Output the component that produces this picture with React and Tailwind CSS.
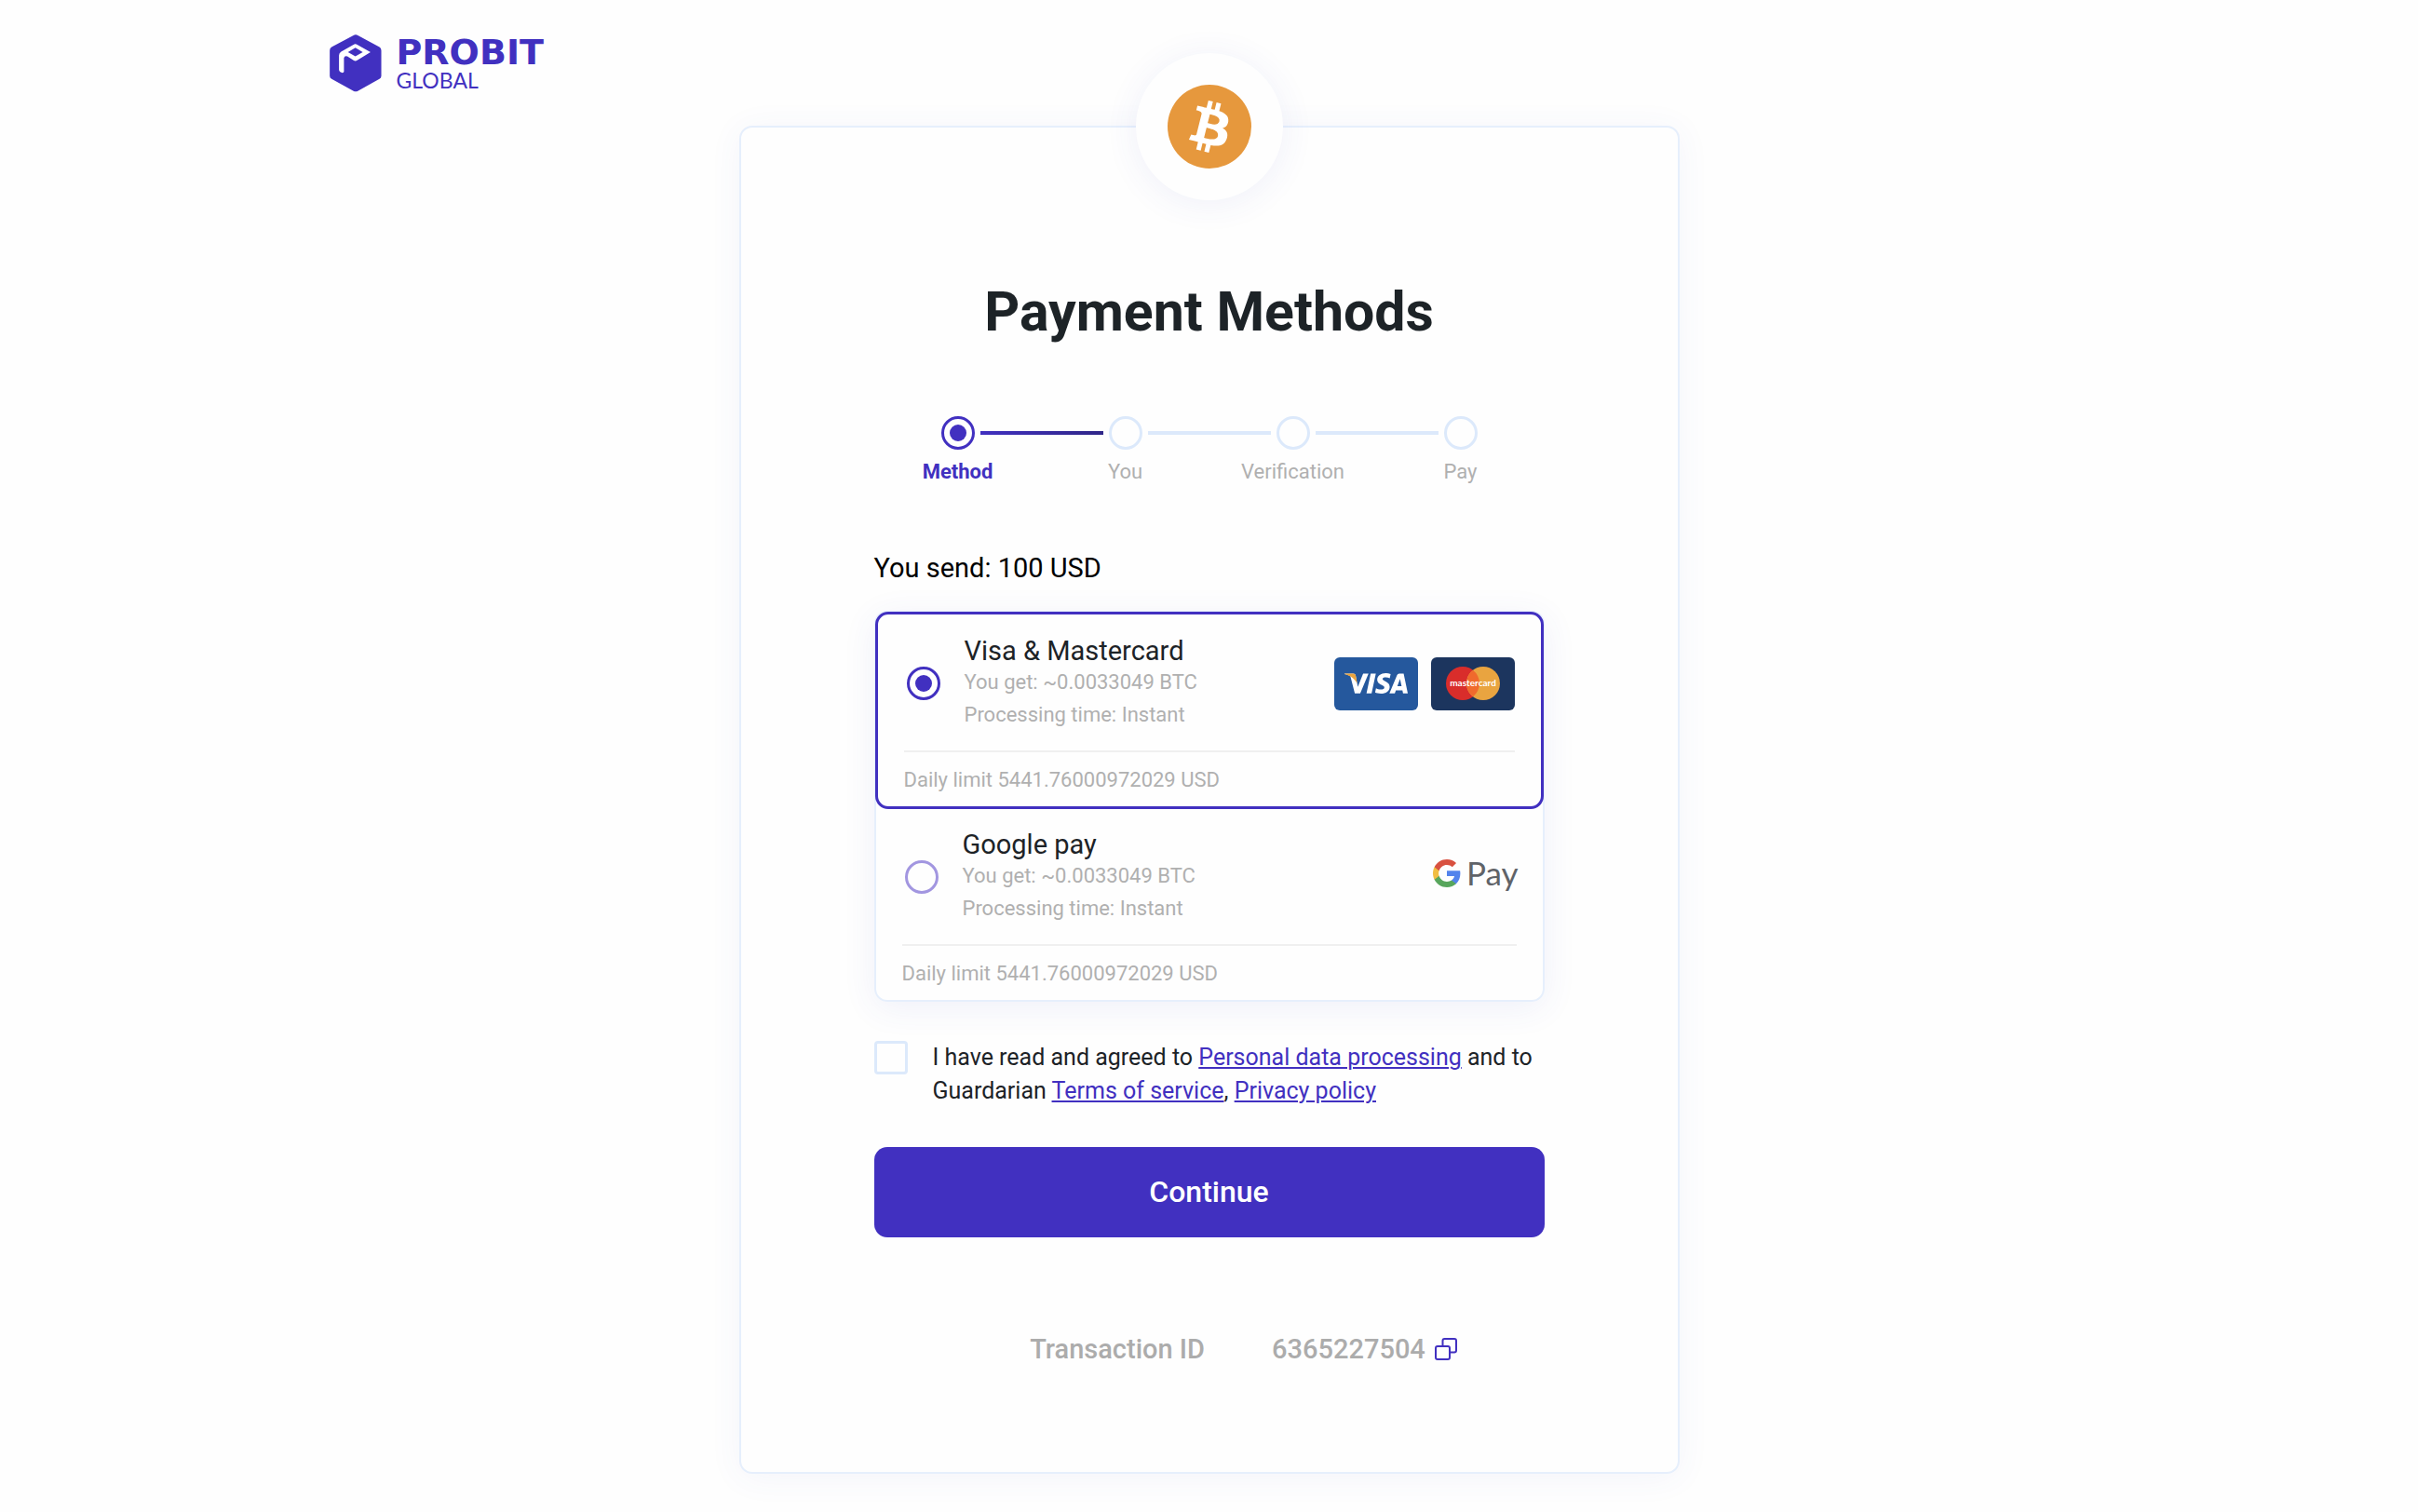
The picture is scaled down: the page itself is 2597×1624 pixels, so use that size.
import { useState } from "react";
import { SiVisa } from "react-icons/si";

function ProbitMark() {
  return (
    <svg viewBox="40 50 168 187" className="h-[62px] w-14" aria-hidden="true">
      <path
        d="M117 53Q124 49 131 53L201 91Q207 95 207 102V184Q207 191 201 194L131 233Q124 237 117 233L46 194Q40 191 40 184V102Q40 95 46 91Z"
        fill="#4130c0"
      />
      <path
        d="M117 83Q123 79 129 83L172 107L129 134Q123 138 117 134L97 121Q88 118 86 126V171Q85 175 79 174Q71 171 70 165V118Q70 110 77 106Z"
        fill="#fff"
      />
      <path d="M123 93L147 107L123 121L99 107Z" fill="#4130c0" />
    </svg>
  );
}

function BitcoinCoin() {
  return (
    <svg viewBox="0 0 32 32" className="size-[90px]" role="img" aria-label="Bitcoin">
      <circle cx="16" cy="16" r="16" fill="#e6983d" />
      <path
        fill="#fff"
        d="M23.189 14.02c.314-2.096-1.283-3.223-3.465-3.975l.708-2.84-1.728-.43-.69 2.765c-.454-.114-.92-.22-1.385-.326l.695-2.783L15.596 6l-.708 2.839c-.376-.086-.746-.17-1.104-.26l.002-.009-2.384-.595-.46 1.846s1.283.294 1.256.312c.7.175.826.638.805 1.006l-.806 3.235c.048.012.11.03.18.057l-.183-.045-1.13 4.532c-.086.212-.303.531-.793.41.018.025-1.256-.313-1.256-.313l-.858 1.978 2.25.561c.418.105.828.215 1.231.318l-.715 2.872 1.727.43.708-2.84c.472.127.93.245 1.378.357l-.706 2.828 1.728.43.715-2.866c2.948.558 5.164.333 6.097-2.333.752-2.146-.037-3.385-1.588-4.192 1.13-.26 1.98-1.003 2.207-2.538zm-3.95 5.538c-.533 2.147-4.148.986-5.32.695l.95-3.805c1.172.293 4.929.872 4.37 3.11zm.535-5.569c-.487 1.953-3.495.96-4.47.717l.86-3.45c.975.243 4.118.696 3.61 2.733z"
      />
    </svg>
  );
}

function VisaCard() {
  return (
    <span className="relative flex h-[57px] w-[90px] items-center justify-center rounded-md bg-[#25589d]">
      <SiVisa className="size-[68px] text-white" aria-label="Visa" />
      <svg viewBox="0 0 24 24" className="absolute size-[68px]" aria-hidden="true">
        <path d="M0 8.479L.046 8.262H3.346a.904.904 0 01.894.764l.6 3.1C4.1 10.5 2.4 9.1 0 8.479Z" fill="#e9a440" />
      </svg>
    </span>
  );
}

function MastercardCard() {
  return (
    <svg viewBox="0 0 90 57" className="h-[57px] w-[90px]" role="img" aria-label="Mastercard">
      <rect width="90" height="57" rx="6" fill="#1c355e" />
      <circle cx="34" cy="28" r="18" fill="#d92d2b" />
      <circle cx="56" cy="28" r="18" fill="#e9a440" />
      <path d="M45 13.8A18 18 0 0 1 45 42.2A18 18 0 0 1 45 13.8Z" fill="#f06a2d" />
      <text x="45" y="31" textAnchor="middle" fontSize="10" fontWeight="700" fill="#fff" className="font-['Lato',sans-serif]">
        mastercard
      </text>
    </svg>
  );
}

function CardLogos() {
  return (
    <span className="flex gap-[14px]">
      <VisaCard />
      <MastercardCard />
    </span>
  );
}

function GooglePayLogo() {
  return (
    <svg viewBox="0 0 90 57" className="h-[57px] w-[90px] overflow-visible" role="img" aria-label="Google Pay">
      <svg x="0" y="9" width="30" height="30" viewBox="1 1 22 22">
        <path fill="#5383ec" d="M22.56 12.25c0-.78-.07-1.53-.2-2.25H12v4.26h5.92c-.26 1.37-1.04 2.53-2.21 3.31v2.77h3.57c2.08-1.92 3.28-4.74 3.28-8.09z" />
        <path fill="#58a65c" d="M12 23c2.97 0 5.46-.98 7.28-2.66l-3.57-2.77c-.98.66-2.23 1.06-3.71 1.06-2.86 0-5.29-1.93-6.16-4.53H2.18v2.84C3.99 20.53 7.7 23 12 23z" />
        <path fill="#f1bd42" d="M5.84 14.09c-.22-.66-.35-1.36-.35-2.09s.13-1.43.35-2.09V7.07H2.18C1.43 8.55 1 10.22 1 12s.43 3.45 1.18 4.93l2.85-2.22.81-.62z" />
        <path fill="#d85140" d="M12 5.38c1.62 0 3.06.56 4.21 1.64l3.15-3.15C17.45 2.09 14.97 1 12 1 7.7 1 3.99 3.47 2.18 7.07l3.66 2.84c.87-2.6 3.3-4.53 6.16-4.53z" />
      </svg>
      <text x="36" y="37" fontSize="35" fill="#606368" className="font-['Lato',sans-serif]">
        Pay
      </text>
    </svg>
  );
}

const steps = ["Method", "You", "Verification", "Pay"];

function Stepper({ current }) {
  return (
    <ol className="mx-auto grid w-full grid-cols-4">
      {steps.map((step, i) => (
        <li key={step} className="relative flex flex-col items-center gap-1.5" aria-current={i === current ? "step" : undefined}>
          {i > 0 && (
            <span
              className={
                i <= current + 1
                  ? "absolute top-4 right-[calc(50%+24px)] left-[calc(-50%+24px)] h-1 bg-linear-to-r from-[#4130c0] to-[#2f2688]"
                  : "absolute top-4 right-[calc(50%+24px)] left-[calc(-50%+24px)] h-1 bg-[#dce9fb]"
              }
            />
          )}
          <span
            className={
              i === current
                ? "flex size-9 items-center justify-center rounded-full border-3 border-[#4130c0]"
                : "size-9 rounded-full border-3 border-[#dce9fb]"
            }
          >
            {i === current && <span className="size-[18px] rounded-full bg-[#4130c0]" />}
          </span>
          <span
            className={
              i === current
                ? "text-[22px] leading-9 font-bold text-[#4130c0]"
                : "text-[22px] leading-9 text-[#b0b0b0]"
            }
          >
            {step}
          </span>
        </li>
      ))}
    </ol>
  );
}

function Method({ id, title, logo, checked, onSelect }) {
  return (
    <label
      htmlFor={id}
      className={
        checked
          ? "-m-px block rounded-[14px] border-3 border-[#4130c0] px-7 pt-[23px] pb-[11px]"
          : "block rounded-[14px] px-7 pt-[23px] pb-[11px]"
      }
    >
      <span className="flex items-center pl-[3px]">
        <input
          id={id}
          type="radio"
          name="method"
          checked={checked}
          onChange={onSelect}
          className="flex size-9 shrink-0 appearance-none items-center justify-center rounded-full border-3 border-[#a296e0] checked:border-[#4130c0] checked:before:size-[18px] checked:before:rounded-full checked:before:bg-[#4130c0] checked:before:content-['']"
        />
        <span className="ml-[26px] flex grow flex-col">
          <span className="text-[29px] leading-8 text-[#1d2327]">{title}</span>
          <span className="text-[22px] leading-[35px] text-[#b0b0b0]">You get: ~0.0033049 BTC</span>
          <span className="text-[22px] leading-[35px] text-[#b0b0b0]">Processing time: Instant</span>
        </span>
        {logo}
      </span>
      <span className="mt-[21px] block border-t-2 border-[#f0f0f0] pt-3 text-[22px] leading-[35px] text-[#b0b0b0]">
        Daily limit 5441.76000972029 USD
      </span>
    </label>
  );
}

const linkClass = "text-[#4130c0] underline decoration-2 underline-offset-2";

export default function App() {
  const [method, setMethod] = useState("card");
  const [agreed, setAgreed] = useState(false);

  return (
    <div className="min-h-screen bg-[#fefefe] pb-10 font-['Roboto',sans-serif] text-[#1d2327]">
      <header className="mx-auto flex max-w-[1890px] pt-[37px]">
        <a href="#" aria-label="ProBit Global" className="flex items-center gap-4 text-[#4130c0]">
          <ProbitMark />
          <span className="flex flex-col">
            <span className="font-['DejaVu_Sans',sans-serif] text-[38px] leading-9 font-bold">PROBIT</span>
            <span className="font-['Lato',sans-serif] text-[23px] leading-6">GLOBAL</span>
          </span>
        </a>
      </header>

      <main className="relative mx-auto mt-9 max-w-[1010px] rounded-[14px] border-2 border-[#e6effc] bg-[#fefefe] px-[143px] pt-[158px] pb-28 shadow-[0_4px_36px_rgba(65,80,192,0.06)]">
        <div className="absolute -top-20 left-1/2 flex size-[158px] -translate-x-1/2 items-center justify-center rounded-full bg-[#fefefe] shadow-[0_4px_36px_rgba(65,80,192,0.08)]">
          <BitcoinCoin />
        </div>

        <h1 className="text-center text-[59px] leading-[80px] font-bold">Payment Methods</h1>

        <div className="mt-[72px]">
          <Stepper current={0} />
        </div>

        <form onSubmit={(e) => e.preventDefault()}>
          <p className="mt-[65px] text-[29px] leading-10 text-black">You send: 100 USD</p>

          <fieldset
            aria-label="Payment method"
            className="mt-[26px] rounded-[14px] border-2 border-[#e6effc] shadow-[0_7px_36px_rgba(65,80,192,0.08)]"
          >
            <Method id="card" title="Visa & Mastercard" logo={<CardLogos />} checked={method === "card"} onSelect={() => setMethod("card")} />
            <Method id="gpay" title="Google pay" logo={<GooglePayLogo />} checked={method === "gpay"} onSelect={() => setMethod("gpay")} />
          </fieldset>

          <div className="mt-[42px] flex items-start gap-[27px]">
            <input
              id="agree"
              type="checkbox"
              checked={agreed}
              onChange={(e) => setAgreed(e.target.checked)}
              className="size-9 shrink-0 appearance-none rounded border-3 border-[#dce9fb] checked:bg-[#4130c0]"
            />
            <label htmlFor="agree" className="text-[25px] leading-9">
              I have read and agreed to <a href="#" className={linkClass}>Personal data processing</a> and to Guardarian{" "}
              <a href="#" className={linkClass}>Terms of service</a>, <a href="#" className={linkClass}>Privacy policy</a>
            </label>
          </div>

          <button type="submit" className="mt-[42px] w-full rounded-[14px] bg-[#4130c0] py-7 text-[32px] leading-[41px] font-medium text-white">
            Continue
          </button>
        </form>

        <div className="mt-[100px] flex items-center justify-center gap-[72px] pl-[74px] text-[29px] leading-10 font-medium text-[#acacac]">
          <span>Transaction ID</span>
          <span className="flex items-center gap-2.5">
            6365227504
            <button type="button" aria-label="Copy transaction ID">
              <svg viewBox="0 0 24 24" className="size-6" fill="none" stroke="#4130c0" strokeWidth="2">
                <rect x="1" y="9" width="15" height="14" rx="2" />
                <path d="M8.500 8V3Q8.500 1 10.500 1H21Q23 1 23 3V13.500Q23 15.500 21 15.500H17" />
              </svg>
            </button>
          </span>
        </div>
      </main>
    </div>
  );
}
